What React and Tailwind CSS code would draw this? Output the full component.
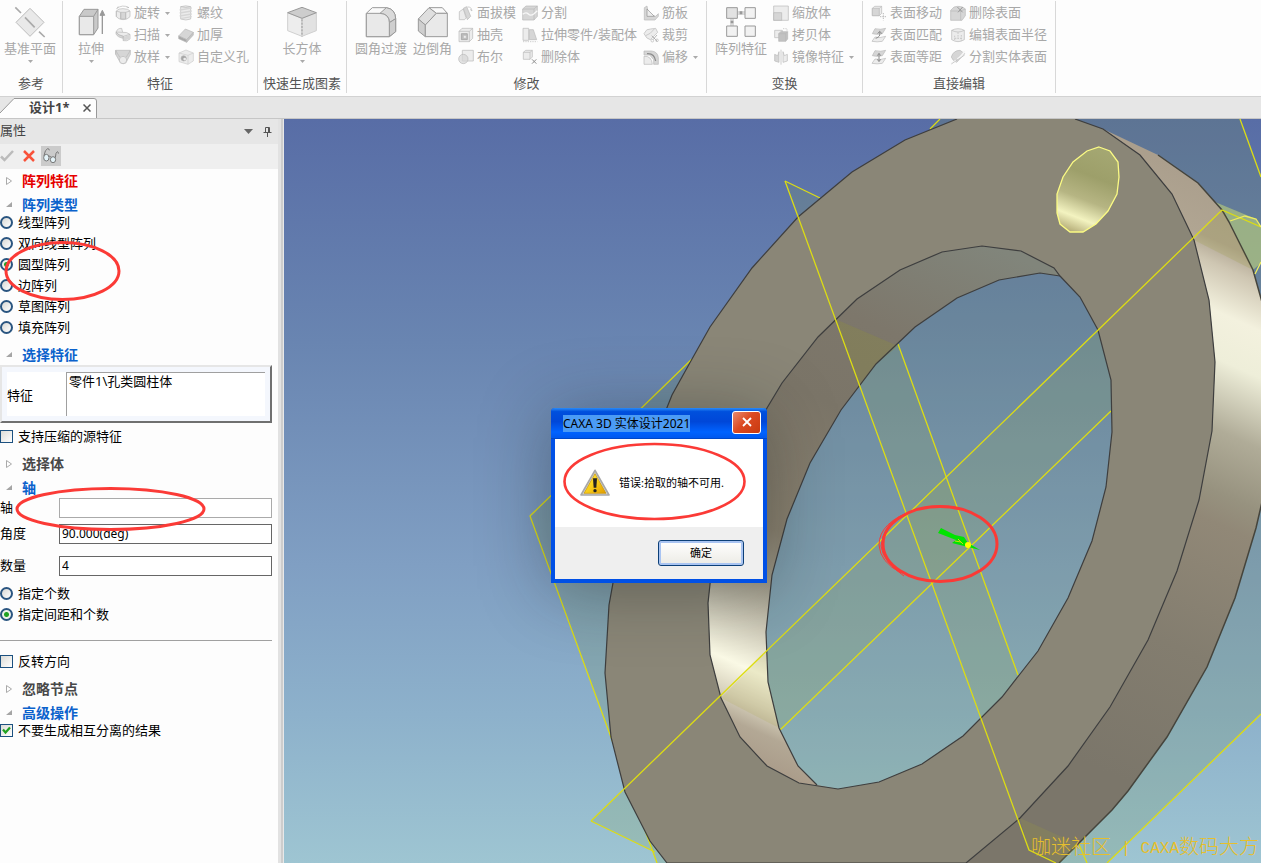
import React, { useState } from 'react';

const G = '#b8b8b8';
const L = '#ececec';
const M = '#d6d6d6';

// small ribbon icons, all on a 48 unit grid
const smallIcons = {
  revolve: (
    <>
      <path d="M4 18 Q10 10 24 11 Q40 11 45 18 V35 Q38 44 24 44 Q10 43 4 35Z" fill={L} />
      <path d="M17 22h15v20H17z" fill={M} />
      <path d="M4 18 L17 22 V42 M32 22 V42 M45 18 L32 22 M4 18V35" />
      <path d="M5 11 Q22 -3 42 8 M42 8 l-7 -2 M10 4 l-5 7" />
    </>
  ),
  sweep: (
    <>
      <path d="M3 15 Q8 3 20 4 L23 16 Q35 14 45 22 V36 Q36 44 25 41 V28 Q10 26 3 15Z" fill={L} />
      <path d="M3 15 Q10 26 25 28 V34 Q8 31 3 21Z" fill={M} />
      <path d="M25 28 L45 22 M3 15 L23 16 M25 28V41" />
      <path d="M26 29 L44 24 V35 L26 41Z" fill={M} stroke="none" />
    </>
  ),
  loft: (
    <>
      <path d="M2 4 H46 V16 L33 41 Q24 48 16 41 L2 16Z" fill={M} />
      <path d="M2 4 L14 24 M46 4 L34 24 M2 16V4" />
      <circle cx="24" cy="33" r="11" fill={L} />
    </>
  ),
  thread: (
    <>
      <path d="M8 5 Q24 0 38 5 V42 Q24 48 8 42Z" fill={L} />
      <path d="M5 15 L41 9 M5 24 L41 18 M5 33 L41 27 M7 41 L41 35" stroke={M} strokeWidth="4" />
      <path d="M8 5 Q24 10 38 5" />
    </>
  ),
  thicken: (
    <>
      <path d="M2 27 L22 6 L46 16 L26 38Z" fill={M} />
      <path d="M2 27 L26 38 V46 L2 35Z" fill="#a8a8a8" />
      <path d="M26 38 L46 16 V24 L26 46Z" fill="#c4c4c4" />
    </>
  ),
  hole: (
    <>
      <path d="M3 12 L24 3 L46 12 V36 L30 46 L3 38Z" fill={L} stroke="#cccccc" />
      <path d="M3 12 L30 19 L46 12 M30 19 V46" stroke="#cccccc" />
      <circle cx="17" cy="28" r="8" fill="#a6a6a6" />
      <circle cx="20" cy="30" r="4" fill={L} stroke="none" />
    </>
  ),
  draft: (
    <>
      <path d="M4 20 L16 12 L24 38 L20 44 H4Z" fill={L} />
      <path d="M16 10 L26 5 L38 34 L28 44Z" fill={M} />
      <path d="M28 6 Q40 4 42 18 M42 18 l-6 -5" />
    </>
  ),
  shell: (
    <>
      <path d="M3 13 L12 4 H44 V34 L34 44 H3Z" fill={L} />
      <path d="M3 13 H34 V44 M34 13 L44 4" />
      <path d="M10 20 H28 V38 H10Z" fill="#bdbdbd" stroke="#999" />
      <path d="M16 25h9v9h-9z" fill={L} />
    </>
  ),
  bool: (
    <>
      <path d="M13 4 H46 V36 H13Z" fill={L} />
      <circle cx="16" cy="30" r="14" fill={M} fillOpacity=".7" />
    </>
  ),
  split: (
    <>
      <path d="M2 12 L12 3 H46 V34 L36 45 H2Z" fill={M} />
      <path d="M2 12 H36 V45 M36 12 L46 3" />
      <path d="M2 28 Q12 20 19 27 T36 26 L46 17" stroke="#f8f8f8" strokeWidth="4" />
    </>
  ),
  stretch: (
    <>
      <path d="M3 4 H20 V40 H3Z" fill={L} />
      <path d="M22 8 L34 8 L44 38 H22Z" fill={M} />
      <path d="M3 44 H46" strokeDasharray="4 3" />
    </>
  ),
  del: (
    <>
      <path d="M4 10 L11 4 H31 V24 L24 31 H4Z" fill={L} />
      <path d="M4 10 H24 V31 M24 10 L31 4" />
      <path d="M30 31 L43 44 M43 31 L30 44" stroke="#8c8c8c" strokeWidth="3" />
    </>
  ),
  rib: (
    <>
      <path d="M4 8 L12 3 L16 26 L38 34 L46 26 V34 L36 45 H4Z" fill={M} />
      <path d="M12 12 L34 34 H12Z" fill={L} stroke="#8f8f8f" />
    </>
  ),
  trim: (
    <>
      <path d="M3 20 Q10 4 22 6 L38 4 L44 16 L22 38 Q10 36 3 20Z" fill={L} />
      <path d="M8 26 Q22 22 34 6" />
      <path d="M26 26 L42 42 M42 24 L30 38" stroke="#949494" />
      <circle cx="28" cy="41" r="4" /><circle cx="42" cy="40" r="4" />
    </>
  ),
  offset: (
    <>
      <path d="M3 6 H26 Q44 8 46 26 V46 H32 V32 L20 18 H3Z" fill={M} />
      <path d="M3 22 Q26 20 28 46 H3Z" fill={L} />
      <path d="M12 14 Q34 12 38 36" stroke="#8c8c8c" strokeWidth="4" />
    </>
  ),
  scale: (
    <>
      <path d="M2 3 H46 V46 H2Z" fill={L} />
      <path d="M2 23 H26 V46 H2Z" fill={M} />
    </>
  ),
  copy: (
    <>
      <path d="M5 10 H28 V32 H5Z" fill={L} />
      <path d="M17 20 L23 14 H44 V36 L38 43 H17Z" fill="#c2c2c2" />
      <path d="M17 20 H38 V43 M38 20 L44 14" />
      <path d="M30 5 H42 V12" strokeDasharray="4 3" />
    </>
  ),
  mirror: (
    <>
      <path d="M18 8 V40 L5 36 V16 L14 20Z" fill={M} />
      <path d="M30 8 V40 L43 36 V16 L34 20Z" fill={L} />
      <path d="M24 2 V47" />
    </>
  ),
  move: (
    <>
      <path d="M4 10 L11 4 H32 V25 L25 32 H4Z" fill={L} />
      <path d="M4 10 H25 V32 H4Z" fill={M} />
      <path d="M25 10 L32 4" />
      <path d="M37 24 V46 M27 35 H47" stroke="#999" strokeDasharray="4 3" />
    </>
  ),
  match: (
    <>
      <path d="M12 5 Q28 9 44 4 L34 20 Q18 24 4 20Z" fill={M} />
      <path d="M12 30 Q28 34 44 28 L34 43 Q18 46 3 43Z" fill={L} />
      <path d="M14 34 Q30 30 26 14 M20 20 L26 13 L33 20" stroke="#8c8c8c" strokeWidth="3" />
    </>
  ),
  dist: (
    <>
      <path d="M12 5 Q28 9 44 4 L34 20 Q18 24 4 20Z" fill={M} />
      <path d="M12 30 Q28 34 44 28 L34 43 Q18 46 3 43Z" fill={L} />
      <path d="M24 14 V36 M19 20 L24 13 L29 20 M19 31 L24 38 L29 31" stroke="#8c8c8c" strokeWidth="3" />
    </>
  ),
  delface: (
    <>
      <path d="M2 16 L12 6 Q34 0 46 12 V32 L36 46 H2Z" fill={M} />
      <path d="M2 18 H32 V46 M32 18 L46 12" />
      <path d="M22 6 L38 22 M38 6 L24 22" stroke="#999" strokeWidth="3" />
    </>
  ),
  radius: (
    <>
      <path d="M5 10 Q24 0 43 10 V38 Q24 50 5 38Z" fill={L} />
      <path d="M5 10 Q24 20 43 10" />
      <path d="M24 16 V34 M14 26 V42 M34 24 V42 M14 34 H34" strokeDasharray="5 3" />
    </>
  ),
  splitface: (
    <>
      <path d="M4 24 Q10 4 30 4 L44 14 L20 40 Q8 36 4 24Z" fill={M} />
      <path d="M3 44 L18 34 M22 30 Q34 24 44 6" stroke="#f6f6f6" strokeWidth="5" />
      <path d="M4 45 L44 18" />
    </>
  ),
};

const largeIcons = {
  datum: (
    <>
      <path d="M48 7 L90 49 L48 91 L6 49Z" fill="#e9e9e9" stroke="#bcbcbc" />
      <path d="M4 4 L21 21 M33 34 L62 64 M75 77 L92 93" strokeWidth="5" stroke="#aaa" />
    </>
  ),
  extrude: (
    <>
      <path d="M13 31 L27 10 H69 V66 L56 86 H13Z" fill="#c9c9c9" />
      <path d="M13 31 H56 V86 H13Z" fill="#e9e9e9" />
      <path d="M56 31 L69 10" />
      <path d="M82 84 V22" strokeWidth="4" />
      <path d="M75 28 L82 13 L89 28Z" fill="#999" />
    </>
  ),
  box: (
    <>
      <path d="M5 20 L48 37 V91 L5 74Z" fill="#ededed" stroke="#d0d0d0" />
      <path d="M91 20 L48 37 V91 L91 74Z" fill="#e2e2e2" stroke="#d0d0d0" />
      <path d="M48 4 L91 20 L48 37 L5 20Z" fill="#cdcdcd" />
      <path d="M48 40 V91" strokeDasharray="6 4" />
    </>
  ),
  fillet: (
    <>
      <path d="M4 92 V22 L22 5 H64 Q91 9 92 38 V77 L73 92Z" fill="#fafafa" />
      <path d="M45 22 L64 5 Q91 9 92 38 L73 50 Q73 24 45 22Z" fill="#dadada" />
      <path d="M73 50 L92 38 V77 L73 92Z" fill="#cfcfcf" />
      <path d="M4 22 H45 Q73 24 73 50 V92 H4Z" fill="#e9e9e9" />
    </>
  ),
  chamfer: (
    <>
      <path d="M36 5 H76 L91 22 H58Z" fill="#fafafa" />
      <path d="M4 39 L36 5 L58 22 L25 57Z" fill="#dfdfdf" />
      <path d="M4 39 V75 L25 92 V57Z" fill="#cfcfcf" />
      <path d="M25 92 V57 L58 22 H91 V92Z" fill="#e9e9e9" />
    </>
  ),
  pattern: (
    <>
      <path d="M37 18 H60 M37 24 H60 M18 37 V60 M24 37 V60" strokeWidth="2" />
      <path d="M5 5 H37 V37 H5Z" fill="#e2e2e2" />
      <path d="M60 5 H91 V37 H60Z M5 60 H37 V91 H5Z M60 60 H91 V91 H60Z" fill="#f2f2f2" />
      <path d="M44 16 h8 v9 h-8z M17 44 h8 v8 h-8z" fill="#999" stroke="none" />
    </>
  ),
};

const ribbon = [
  { title: '参考', box: 'pl-1 pr-1.5', large: [['基准平面', 'datum', true]], cols: [] },
  {
    title: '特征',
    box: 'pl-3 pr-2 gap-2',
    large: [['拉伸', 'extrude', true]],
    cols: [
      [['旋转', 'revolve', true], ['扫描', 'sweep', true], ['放样', 'loft', true]],
      [['螺纹', 'thread'], ['加厚', 'thicken'], ['自定义孔', 'hole']],
    ],
  },
  { title: '快速生成图素', box: 'px-1', large: [['长方体', 'box', true]], cols: [] },
  {
    title: '修改',
    box: 'px-2 gap-1.5',
    large: [['圆角过渡', 'fillet'], ['边倒角', 'chamfer']],
    cols: [
      [['面拔模', 'draft'], ['抽壳', 'shell'], ['布尔', 'bool']],
      [['分割', 'split'], ['拉伸零件/装配体', 'stretch'], ['删除体', 'del']],
      [['筋板', 'rib'], ['裁剪', 'trim'], ['偏移', 'offset', true]],
    ],
  },
  {
    title: '变换',
    box: 'px-2 gap-1.5',
    large: [['阵列特征', 'pattern']],
    cols: [[['缩放体', 'scale'], ['拷贝体', 'copy'], ['镜像特征', 'mirror', true]]],
  },
  {
    title: '直接编辑',
    box: 'px-2 gap-2',
    large: [],
    cols: [
      [['表面移动', 'move'], ['表面匹配', 'match'], ['表面等距', 'dist']],
      [['删除表面', 'delface'], ['编辑表面半径', 'radius'], ['分割实体表面', 'splitface']],
    ],
  },
];

const Caret = () => (
  <svg viewBox="0 0 5 3" className="h-[3px] w-[5px] shrink-0"><path d="M0 0h5L2.5 3z" fill="#aaa" /></svg>
);

const LargeButton = ({ text, icon, caret }) => (
  <button className="flex flex-col items-center pt-[5px] text-[#a8a8a8]">
    <svg viewBox="0 0 96 96" className="size-8" fill="none" stroke="#999" strokeWidth="3">{largeIcons[icon]}</svg>
    <span className="leading-5">{text}</span>
    {caret && <span className="pt-0.5"><Caret /></span>}
  </button>
);

const SmallButton = ({ text, icon, caret }) => (
  <button className="flex h-[22px] items-center gap-[3px] whitespace-nowrap text-[#a8a8a8]">
    <svg viewBox="0 0 48 48" className="size-4 shrink-0" fill="none" stroke={G} strokeWidth="2">{smallIcons[icon]}</svg>
    <span>{text}</span>
    {caret && <span className="pl-0.5"><Caret /></span>}
  </button>
);

const Ribbon = () => (
  <header className="flex h-[97px] shrink-0 border-b border-[#d2d2d2] bg-[#fdfdfd] pt-px">
    {ribbon.map((group) => (
      <section key={group.title} className="flex h-[92px] shrink-0 flex-col justify-between border-r border-[#d8d8d8]">
        <div className={`flex items-start justify-center ${group.box}`}>
          {group.large.map(([text, icon, caret]) => (
            <LargeButton key={text} text={text} icon={icon} caret={caret} />
          ))}
          {group.cols.map((col, i) => (
            <div key={i} className="pt-px">
              {col.map(([text, icon, caret]) => (
                <SmallButton key={text} text={text} icon={icon} caret={caret} />
              ))}
            </div>
          ))}
        </div>
        <h2 className="px-[5px] text-center leading-5 whitespace-nowrap text-[#555]">{group.title}</h2>
      </section>
    ))}
  </header>
);

const TabBar = () => (
  <nav className="flex h-[22px] shrink-0 items-end border-b border-[#c6c6c6] bg-[#e6e6e6]">
    <div className="relative flex h-5 w-[97px] items-center">
      <svg viewBox="0 0 97 20" className="absolute inset-0 size-full">
        <path d="M0 15 L14 .5 H94 Q96.500 .5 96.500 3 V20 H0Z" fill="#fdfdfd" />
        <path d="M0 15 L14 .5 H94 Q96.500 .5 96.500 3 V20" fill="none" stroke="#999" />
      </svg>
      <a href="#design" className="relative pl-[29px] font-bold text-[#444]">设计1*</a>
      <button aria-label="关闭" className="relative ml-auto pr-1.5">
        <svg viewBox="0 0 8 8" className="size-2"><path d="M.5 .5l7 7M7.500 .5l-7 7" stroke="#555" strokeWidth="1.500" /></svg>
      </button>
    </div>
  </nav>
);

const Heading = ({ children, open, color = 'text-[#484848]' }) => (
  <h3 className={`flex h-6 items-center pl-1.5 text-sm font-bold ${color}`}>
    <svg viewBox="0 0 7 8" className="mr-[9px] h-2 w-[7px]">
      {open ? <path d="M6 1V6H0z" fill="#a5a5a5" /> : <path d="M.5 .5V7.500L5.500 4z" fill="#fff" stroke="#aaa" />}
    </svg>
    {children}
  </h3>
);

const Radio = ({ text, name, checked, onChange }) => (
  <label className="flex h-[21px] items-center gap-[5px]">
    <input
      type="radio"
      name={name}
      checked={checked}
      onChange={onChange}
      className="size-[13px] shrink-0 appearance-none rounded-full border-2 border-[#2a5580] bg-[linear-gradient(135deg,#d8d8d4,#ffffff)] checked:bg-[radial-gradient(circle,#21a121_0_2px,#eef2ea_3px)]"
    />
    {text}
  </label>
);

const Check = ({ text, defaultChecked }) => (
  <label className="flex h-[21px] items-center gap-[5px]">
    <span className="relative flex size-[13px] shrink-0">
      <input
        type="checkbox"
        defaultChecked={defaultChecked}
        className="peer size-[13px] appearance-none border border-[#1c5180] bg-[linear-gradient(135deg,#dcdcd7,#ffffff)]"
      />
      <svg viewBox="0 0 13 13" className="pointer-events-none absolute inset-0 hidden peer-checked:block">
        <path d="M3 5.500L5.500 8.500L10 3.500" fill="none" stroke="#21a121" strokeWidth="2.200" />
      </svg>
    </span>
    {text}
  </label>
);

const Field = ({ id, text, value, border = 'border-[#666]' }) => (
  <div className="flex h-5 items-center">
    <label htmlFor={id} className="w-[59px] shrink-0">{text}</label>
    <input id={id} defaultValue={value} className={`h-5 min-w-0 flex-1 border bg-white px-0.5 pb-0.5 text-xs ${border}`} />
  </div>
);

const types = ['线型阵列', '双向线型阵列', '圆型阵列', '边阵列', '草图阵列', '填充阵列'];
const modes = ['指定个数', '指定间距和个数'];

const Panel = () => {
  const [type, setType] = useState('圆型阵列');
  const [mode, setMode] = useState('指定间距和个数');

  return (
    <aside className="relative flex w-[284px] shrink-0 border-r border-[#e8e8e8] bg-[#e2e2e2]">
      <div className="flex w-[278px] flex-col bg-[#fdfdfd] text-black">
        <div className="flex h-[25px] items-center bg-[#e6e6e6] pr-1.5 text-[#444]">
          <h2 className="flex-1 pb-0.5">属性</h2>
          <button aria-label="菜单" className="pr-2.5">
            <svg viewBox="0 0 9 5" className="h-[5px] w-[9px]"><path d="M0 0h9L4.500 5z" fill="#666" /></svg>
          </button>
          <button aria-label="固定">
            <svg viewBox="0 0 9 10" className="h-2.5 w-[9px]" fill="none" stroke="#555">
              <path d="M2.500 5.500V.5H6.500V5.500M5.500 .5V5.500M.5 5.500H8.500M4.500 5.500V10" />
            </svg>
          </button>
        </div>
        <div className="flex h-[25px] items-center bg-[#efefef] pb-0.5">
          <button aria-label="确认" className="w-[23px]">
            <svg viewBox="0 0 14 12" className="h-3 w-3.5"><path d="M1 6.500L4.500 10L13 1" fill="none" stroke="#bbb" strokeWidth="2.500" /></svg>
          </button>
          <button aria-label="取消" className="w-[18px]">
            <svg viewBox="0 0 12 12" className="size-3"><path d="M1 1L11 11M11 1L1 11" stroke="#f8523a" strokeWidth="2.500" /></svg>
          </button>
          <button aria-label="预览" className="flex size-5 items-center justify-center bg-[#cbcbcb]">
            <svg viewBox="0 0 48 48" className="size-4" fill="#e4f3f8" stroke="#777" strokeWidth="3">
              <ellipse cx="10" cy="29" rx="8" ry="10" />
              <ellipse cx="30" cy="35" rx="8" ry="9" />
              <path d="M17 25Q21 22 24 28M3 23Q6 4 14 2Q19 2 19 7M37 29Q38 12 43 11Q47 12 46 17" fill="none" />
            </svg>
          </button>
        </div>

        <div className="pr-1.5">
          <Heading color="text-[#e60000]">阵列特征</Heading>
          <Heading open color="text-[#0b62cc]">阵列类型</Heading>
          <div className="-mt-[5px]">
            {types.map((t) => (
              <Radio key={t} name="type" text={t} checked={type === t} onChange={() => setType(t)} />
            ))}
          </div>
          <div className="mt-[5px]">
            <Heading open color="text-[#0b62cc]">选择特征</Heading>
          </div>
          <div className="-mt-0.5 flex h-[58px] items-stretch border-2 border-t-[#e6e6e6] border-r-[#707070] border-b-[#707070] border-l-[#e6e6e6] bg-[#f4f7fd] p-[5px]">
            <label htmlFor="feature" className="flex w-[59px] items-center bg-white pt-1">特征</label>
            <textarea
              id="feature"
              defaultValue="零件1\孔类圆柱体"
              className="min-w-0 flex-1 resize-none overflow-hidden border-t border-l border-[#a0a0a0] bg-white px-0.5 leading-4"
            />
          </div>
          <div className="mt-[3px]">
            <Check text="支持压缩的源特征" />
          </div>
          <div className="mt-[5px]">
            <Heading>选择体</Heading>
            <Heading open color="text-[#0b62cc]">轴</Heading>
          </div>
          <div className="-mt-0.5">
            <Field id="axis" text="轴" value="" border="border-[#aaa]" />
          </div>
          <div className="mt-1.5">
            <Field id="angle" text="角度" value="90.000(deg)" />
          </div>
          <div className="mt-3">
            <Field id="count" text="数量" value="4" />
          </div>
          <div className="mt-[7px]">
            {modes.map((m) => (
              <Radio key={m} name="mode" text={m} checked={mode === m} onChange={() => setMode(m)} />
            ))}
          </div>
          <hr className="mt-[15px] mb-2.5 border-[#a0a0a0]" />
          <Check text="反转方向" />
          <div className="mt-[5px]">
            <Heading>忽略节点</Heading>
            <Heading open color="text-[#0b62cc]">高级操作</Heading>
          </div>
          <div className="-mt-[5px]">
            <Check text="不要生成相互分离的结果" defaultChecked />
          </div>
        </div>
      </div>
      <div className="ml-[3px] w-0.5 bg-[#cdcdcd]" />
      <svg viewBox="0 0 284 500" className="pointer-events-none absolute top-0 left-0 h-[500px] w-[284px]" fill="none" stroke="#fb3a36" strokeWidth="3">
        <ellipse cx="62.500" cy="152" rx="56.500" ry="28.500" />
        <ellipse cx="110.500" cy="390" rx="93.500" ry="20.500" />
      </svg>
    </aside>
  );
};

const outer =
  'M957 119 L905 140 L852 172 L798 217 L752 268 L710 327 L692 359 L672 395 L640 475 L613 583 L609 605 L605 673 L611 737 L625 792 L650 841 L667 863 L966 863 L1020 818 L1068 766 L1110 707 L1148 640 L1177 571 L1199 500 L1212 431 L1215 362 L1209 300 L1194 240 L1172 194 L1140 155 L1103 129 L1075 119';
const bore =
  'M982 246 L1021 251 L1054 268 L1060 276 L1080 297 L1098 330 L1111 380 L1112 432 L1106 487 L1092 541 L1068 598 L1038 651 L1002 697 L963 736 L922 764 L879 782 L838 789 L799 783 L767 766 L740 737 L721 698 L710 655 L708 603 L711 575 L730 480 L767 408 L782 383 L818 337 L857 299 L900 270 L942 252 Z';
const boreBack =
  'M1060 276 L1040 273 L999 280 L957 298 L915 327 L876 364 L841 410 L810 463 L787 519 L772 575 L766 632 L768 682 L779 728 L798 766 L817 785';
const rim =
  'M1103 129 L1158 155 L1198 183 L1222 210 L1229 222 L1253 270 L1262 302 L1275 400 L1262 502 L1256 528 L1235 598 L1207 667 L1167 737 L1128 791 L1112 810 L1059 863';
const cylinder =
  'M1099 147 L1110 151 L1118 162 L1119 177 L1117 194 L1108 211 L1096 224 L1083 232 L1070 232 L1060 224 L1057 213 L1057 194 L1063 177 L1073 162 L1087 151 Z';

const Scene = () => (
  <svg viewBox="284 119 977 744" preserveAspectRatio="xMinYMin slice" className="absolute inset-0 size-full" fill="none">
    <defs>
      <linearGradient id="rimFill" gradientUnits="userSpaceOnUse" x1="1250" y1="130" x2="956" y2="783">
        <stop offset=".09" stopColor="#ab9f8d" />
        <stop offset=".16" stopColor="#b0a592" />
        <stop offset=".19" stopColor="#cec6b2" />
        <stop offset=".25" stopColor="#f3f1de" />
        <stop offset=".31" stopColor="#eeeed9" />
        <stop offset=".4" stopColor="#b0ac98" />
        <stop offset=".48" stopColor="#97927f" />
        <stop offset=".52" stopColor="#918877" />
        <stop offset=".7" stopColor="#837d6f" />
        <stop offset=".9" stopColor="#7b766a" />
      </linearGradient>
      <linearGradient id="boreFill" gradientUnits="userSpaceOnUse" x1="1000" y1="250" x2="754" y2="796">
        <stop offset="0" stopColor="#81857b" />
        <stop offset=".2" stopColor="#7d776b" />
        <stop offset=".35" stopColor="#7b7568" />
        <stop offset=".58" stopColor="#8b8270" />
        <stop offset=".67" stopColor="#a09b8a" />
        <stop offset=".74" stopColor="#cfcbb9" />
        <stop offset=".81" stopColor="#fbfae6" />
        <stop offset=".86" stopColor="#d8d2bd" />
        <stop offset=".9" stopColor="#b3a895" />
        <stop offset=".95" stopColor="#aa9c8a" />
      </linearGradient>
      <linearGradient id="cylFill" gradientUnits="userSpaceOnUse" x1="1105" y1="147" x2="1072" y2="232">
        <stop offset="0" stopColor="#a5a873" />
        <stop offset=".35" stopColor="#9d9f6a" />
        <stop offset=".62" stopColor="#b6b583" />
        <stop offset=".83" stopColor="#f3f3c0" />
        <stop offset="1" stopColor="#b5ad78" />
      </linearGradient>
      <clipPath id="boreClip"><path d={boreBack + ' L838 789 L879 782 L922 764 L963 736 L1002 697 L1038 651 L1068 598 L1092 541 L1106 487 L1112 432 L1111 380 L1098 330 L1080 297 Z'} /></clipPath>
    </defs>

    {/* datum planes behind the part */}
    <path d="M530 516 L940 119 H1240 L1261 177 V714 L1107 863 H657Z" fill="#73914f" fillOpacity=".2" />
    <path d="M785 181 L820 198 L800 222Z M591 821 L630 784 L655 852Z" fill="#82a050" fillOpacity=".2" />
    <path d="M1215 202 L1256 219 L1262 228 V262 L1253 270Z" fill="#bed27a" fillOpacity=".6" />
    <g clipPath="url(#boreClip)" fill="#93a658" fillOpacity=".2">
      <path d="M785 181 L859 385 L1029 850 L1083 850 L898 344Z" />
      <path d="M591 821 L1222 210 L1261 266 L657 849Z" />
    </g>
    <g stroke="#dcdc14" strokeWidth="1.300">
      <path d="M692 359 L530 516 L657 863 M930 129 L940 119 M1240 119 L1261 177 M1261 714 L1107 863" />
      <path d="M820 198 L785 181 M591 821 L655 852 M1078 842 L1087 863" />
      <path d="M898 344 L1018 675 M780 730 L1111 411" />
    </g>

    {/* ring */}
    <path d={rim + ' L966 863 L1020 818 L1068 766 L1110 707 L1148 640 L1177 571 L1199 500 L1212 431 L1215 362 L1209 300 L1194 240 L1172 194 L1140 155Z'} fill="url(#rimFill)" />
    <path d={rim.replace('M1103 129 L1158 155', 'M1158 155')} stroke="#45443c" strokeWidth="1.500" />
    <path fillRule="evenodd" d={bore + ' ' + boreBack + ' L838 789 L879 782 L922 764 L963 736 L1002 697 L1038 651 L1068 598 L1092 541 L1106 487 L1112 432 L1111 380 L1098 330 L1080 297 Z'} fill="url(#boreFill)" />
    <path fillRule="evenodd" d={outer + 'Z ' + bore} fill="#8a8677" />
    <path d="M835 319 L898 346 L876 364 L859 387Z" fill="#8a8a48" fillOpacity=".4" />
    <path d="M1194 240 L1253 270 L1222 210Z M1020 818 L1080 845 L1059 863 L1029 850Z" fill="#9a9a40" fillOpacity=".22" />
    <path d="M721 698 L779 728 L768 682 L766 652Z" fill="#b0ac50" fillOpacity=".2" />
    <g stroke="#3e3e3e" strokeWidth="1.200">
      <path d={outer} />
      <path d={bore} />
      <path d={boreBack} />
    </g>
    <path d={cylinder} fill="url(#cylFill)" stroke="#fbfb84" strokeWidth="1.300" />

    {/* plane edges drawn over the part */}
    <g stroke="#dcdc14" strokeWidth="1.300">
      <path d="M785 181 L1029 850 L1056 863" />
      <path d="M591 821 L1222 210 L1261 227" />
      <path d="M1230 221 L1245 216 L1256 219 L1261 227 M1255 274 L1261 262" stroke="#ecec60" />
    </g>

    <path d="M941 528 L955 535 L964 537 L968 543 L980 550 L968 547 L952 543 L956 540 L938 533Z" fill="#00e400" />
    <path d="M958 539 l5 5 M955 541 l6 1" stroke="#c9dc10" />
    <circle cx="968" cy="545" r="3" fill="#ffff00" />
    <g stroke="#fb3a36">
      <ellipse cx="940" cy="544" rx="57" ry="37.500" strokeWidth="3" />
      <path d="M915 510 Q879 522 879 545 Q880 562 901 573 M908 513 Q882 526 881 546 Q883 562 904 576" />
    </g>
  </svg>
);

const ErrorDialog = () => (
  <div
    role="dialog"
    aria-labelledby="dialog-title"
    className="absolute top-[289px] left-[267px] w-[216px] rounded-t-[4px] bg-[#0050e6] px-1 pb-1 text-[11px] text-black shadow-[0_6px_70px_rgba(20,30,30,0.38)]"
  >
    <div className="-mx-1 flex h-[31px] items-center justify-between rounded-t-[4px] border-b border-[#0048c8] bg-[linear-gradient(#2a8cf8,#0050dd_12%,#0047d8_45%,#0063ff_80%,#0058ee)] pr-1.5 pl-3">
      <h2 id="dialog-title" className="bg-[#4b9bf5] text-xs leading-[17px] whitespace-nowrap">CAXA 3D 实体设计2021</h2>
      <button aria-label="关闭" className="mb-0.5 flex h-[23px] w-[29px] items-center justify-center rounded-[3px] border border-white bg-[linear-gradient(135deg,#e88a70,#dc4a22_45%,#c83a10)]">
        <svg viewBox="0 0 10 10" className="size-2.5"><path d="M1 1L9 9M9 1L1 9" stroke="#fff" strokeWidth="1.800" /></svg>
      </button>
    </div>
    <div className="relative flex h-[88px] items-center bg-white pl-[25px]">
      <svg viewBox="0 0 90 84" className="h-7 w-[30px]">
        <defs>
          <linearGradient id="warn" x1="0" y1="0" x2="1" y2="1">
            <stop offset="0" stopColor="#fff04a" />
            <stop offset=".5" stopColor="#f9cf18" />
            <stop offset="1" stopColor="#e09a00" />
          </linearGradient>
        </defs>
        <path d="M45 4 L87 78 H3Z" fill="#d8d8d8" stroke="#a8a8a8" strokeWidth="5" strokeLinejoin="round" />
        <path d="M45 14 L78 73 H12Z" fill="url(#warn)" stroke="#c89200" strokeWidth="2" />
        <path d="M39 28 H51 L49 56 H41Z" fill="#222" />
        <circle cx="45" cy="65" r="5" fill="#222" />
      </svg>
      <p className="pl-[9px] whitespace-nowrap">错误:拾取的轴不可用.</p>
      <svg viewBox="0 0 208 88" className="pointer-events-none absolute inset-0 size-full" fill="none" stroke="#fb3a36" strokeWidth="2.600">
        <ellipse cx="99.500" cy="42.500" rx="90" ry="37.500" />
      </svg>
    </div>
    <div className="flex h-[52px] items-center justify-end bg-[#efefef] pr-[19px]">
      <button className="h-[26px] w-[86px] rounded-[3px] border border-[#0c3f78] bg-[linear-gradient(#ffffff,#ecebe5)] shadow-[inset_0_0_0_2px_#a9c4f2]">确定</button>
    </div>
  </div>
);

const App = () => (
  <div className="flex h-screen flex-col overflow-hidden bg-[#fdfdfd] font-['Noto_Sans','Noto_Sans_CJK_SC',sans-serif] text-[13px]">
    <Ribbon />
    <TabBar />
    <div className="flex min-h-0 flex-1">
      <Panel />
      <main className="relative flex-1 overflow-hidden bg-[linear-gradient(#586da6,#6985b1_30%,#809fc3_60%,#8db1cb_80%,#9ec5d2)]">
        <Scene />
        <ErrorDialog />
        <p className="absolute right-0.5 bottom-0 flex items-center font-['Liberation_Mono','Noto_Sans_CJK_SC',monospace] text-xl leading-7 font-light whitespace-nowrap text-[#e6bf2c]">
          <span>咖迷社区</span>
          <span className="px-2.5 text-base">|</span>
          <span className="text-base">CAXA</span>
          <span>数码大方</span>
        </p>
      </main>
    </div>
  </div>
);

export default App;
